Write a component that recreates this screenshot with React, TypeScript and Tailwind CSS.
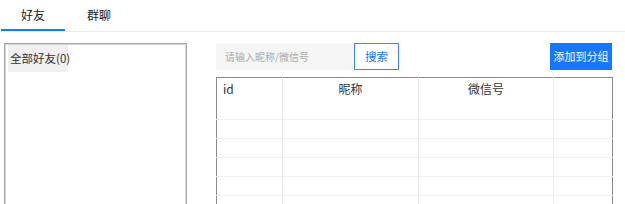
import React from "react";

export default function App() {
  const rows = [0, 1, 2, 3, 4, 5];
  return (
    <div className="w-[625px] h-[204px] overflow-hidden bg-white text-[12px] text-[#333] font-['Noto_Sans_CJK_SC','Noto_Sans',sans-serif] leading-none">
      <div className="flex h-[32px] border-b border-[#ececec]">
        <div className="ml-[1px] w-[64px] h-[31px] flex items-center justify-center border-b-2 border-[#1677ff] pt-[1px]">
          <span className="text-[12px] text-[#222]">好友</span>
        </div>
        <div className="w-[68px] h-[31px] flex items-center justify-center pb-[1px]">
          <span className="text-[12px] text-[#222]">群聊</span>
        </div>
      </div>
      <div className="flex pl-[4px] pt-[11px]">
        <div className="w-[183px] h-[200px] border border-[#a9a9a9] shadow-[inset_1px_1px_0_#d4d4d4,inset_-1px_0_0_#d4d4d4] pl-[3px] pt-[1px]">
          <div className="w-[60px] h-[27px] bg-[#f0f0f0] flex items-center pl-[2px] text-[11.5px] text-[#333] whitespace-nowrap">
            全部好友(0)
          </div>
        </div>
        <div className="ml-[29px] w-[396px] flex flex-col">
          <div className="flex items-center h-[27px]">
            <div className="w-[138px] h-[27px] bg-[#f5f5f5] flex items-center pl-[9px] text-[10px] text-[#aaa] whitespace-nowrap">
              请输入昵称/微信号
            </div>
            <div className="w-[45px] h-[27px] border border-[#3a88f5] bg-white flex items-center justify-center text-[11.5px] text-[#1677ff]">
              搜索
            </div>
            <div className="flex-1" />
            <div className="w-[62px] h-[27px] bg-[#1677ff] flex items-center justify-center text-[11px] text-white whitespace-nowrap">
              添加到分组
            </div>
          </div>
          <table className="mt-[7px] w-[396px] table-fixed border-collapse border border-[#8a8a8a]">
            <colgroup>
              <col className="w-[66px]" />
              <col className="w-[136px]" />
              <col className="w-[135px]" />
              <col className="w-[59px]" />
            </colgroup>
            <thead>
              <tr className="h-[23px]">
                <th className="border-r border-[#ececec] text-left font-normal pl-[6px] text-[12px]">id</th>
                <th className="border-r border-[#ececec] font-normal text-center text-[12px]">昵称</th>
                <th className="border-r border-[#ececec] font-normal text-center text-[12px]">微信号</th>
                <th className="font-normal"></th>
              </tr>
            </thead>
            <tbody>
              {rows.map((r) => (
                <tr key={r} className="h-[19px] border-b border-[#f0f0f0]">
                  <td className="border-r border-[#ececec]"></td>
                  <td className="border-r border-[#ececec]"></td>
                  <td className="border-r border-[#ececec]"></td>
                  <td></td>
                </tr>
              ))}
            </tbody>
          </table>
        </div>
      </div>
    </div>
  );
}
